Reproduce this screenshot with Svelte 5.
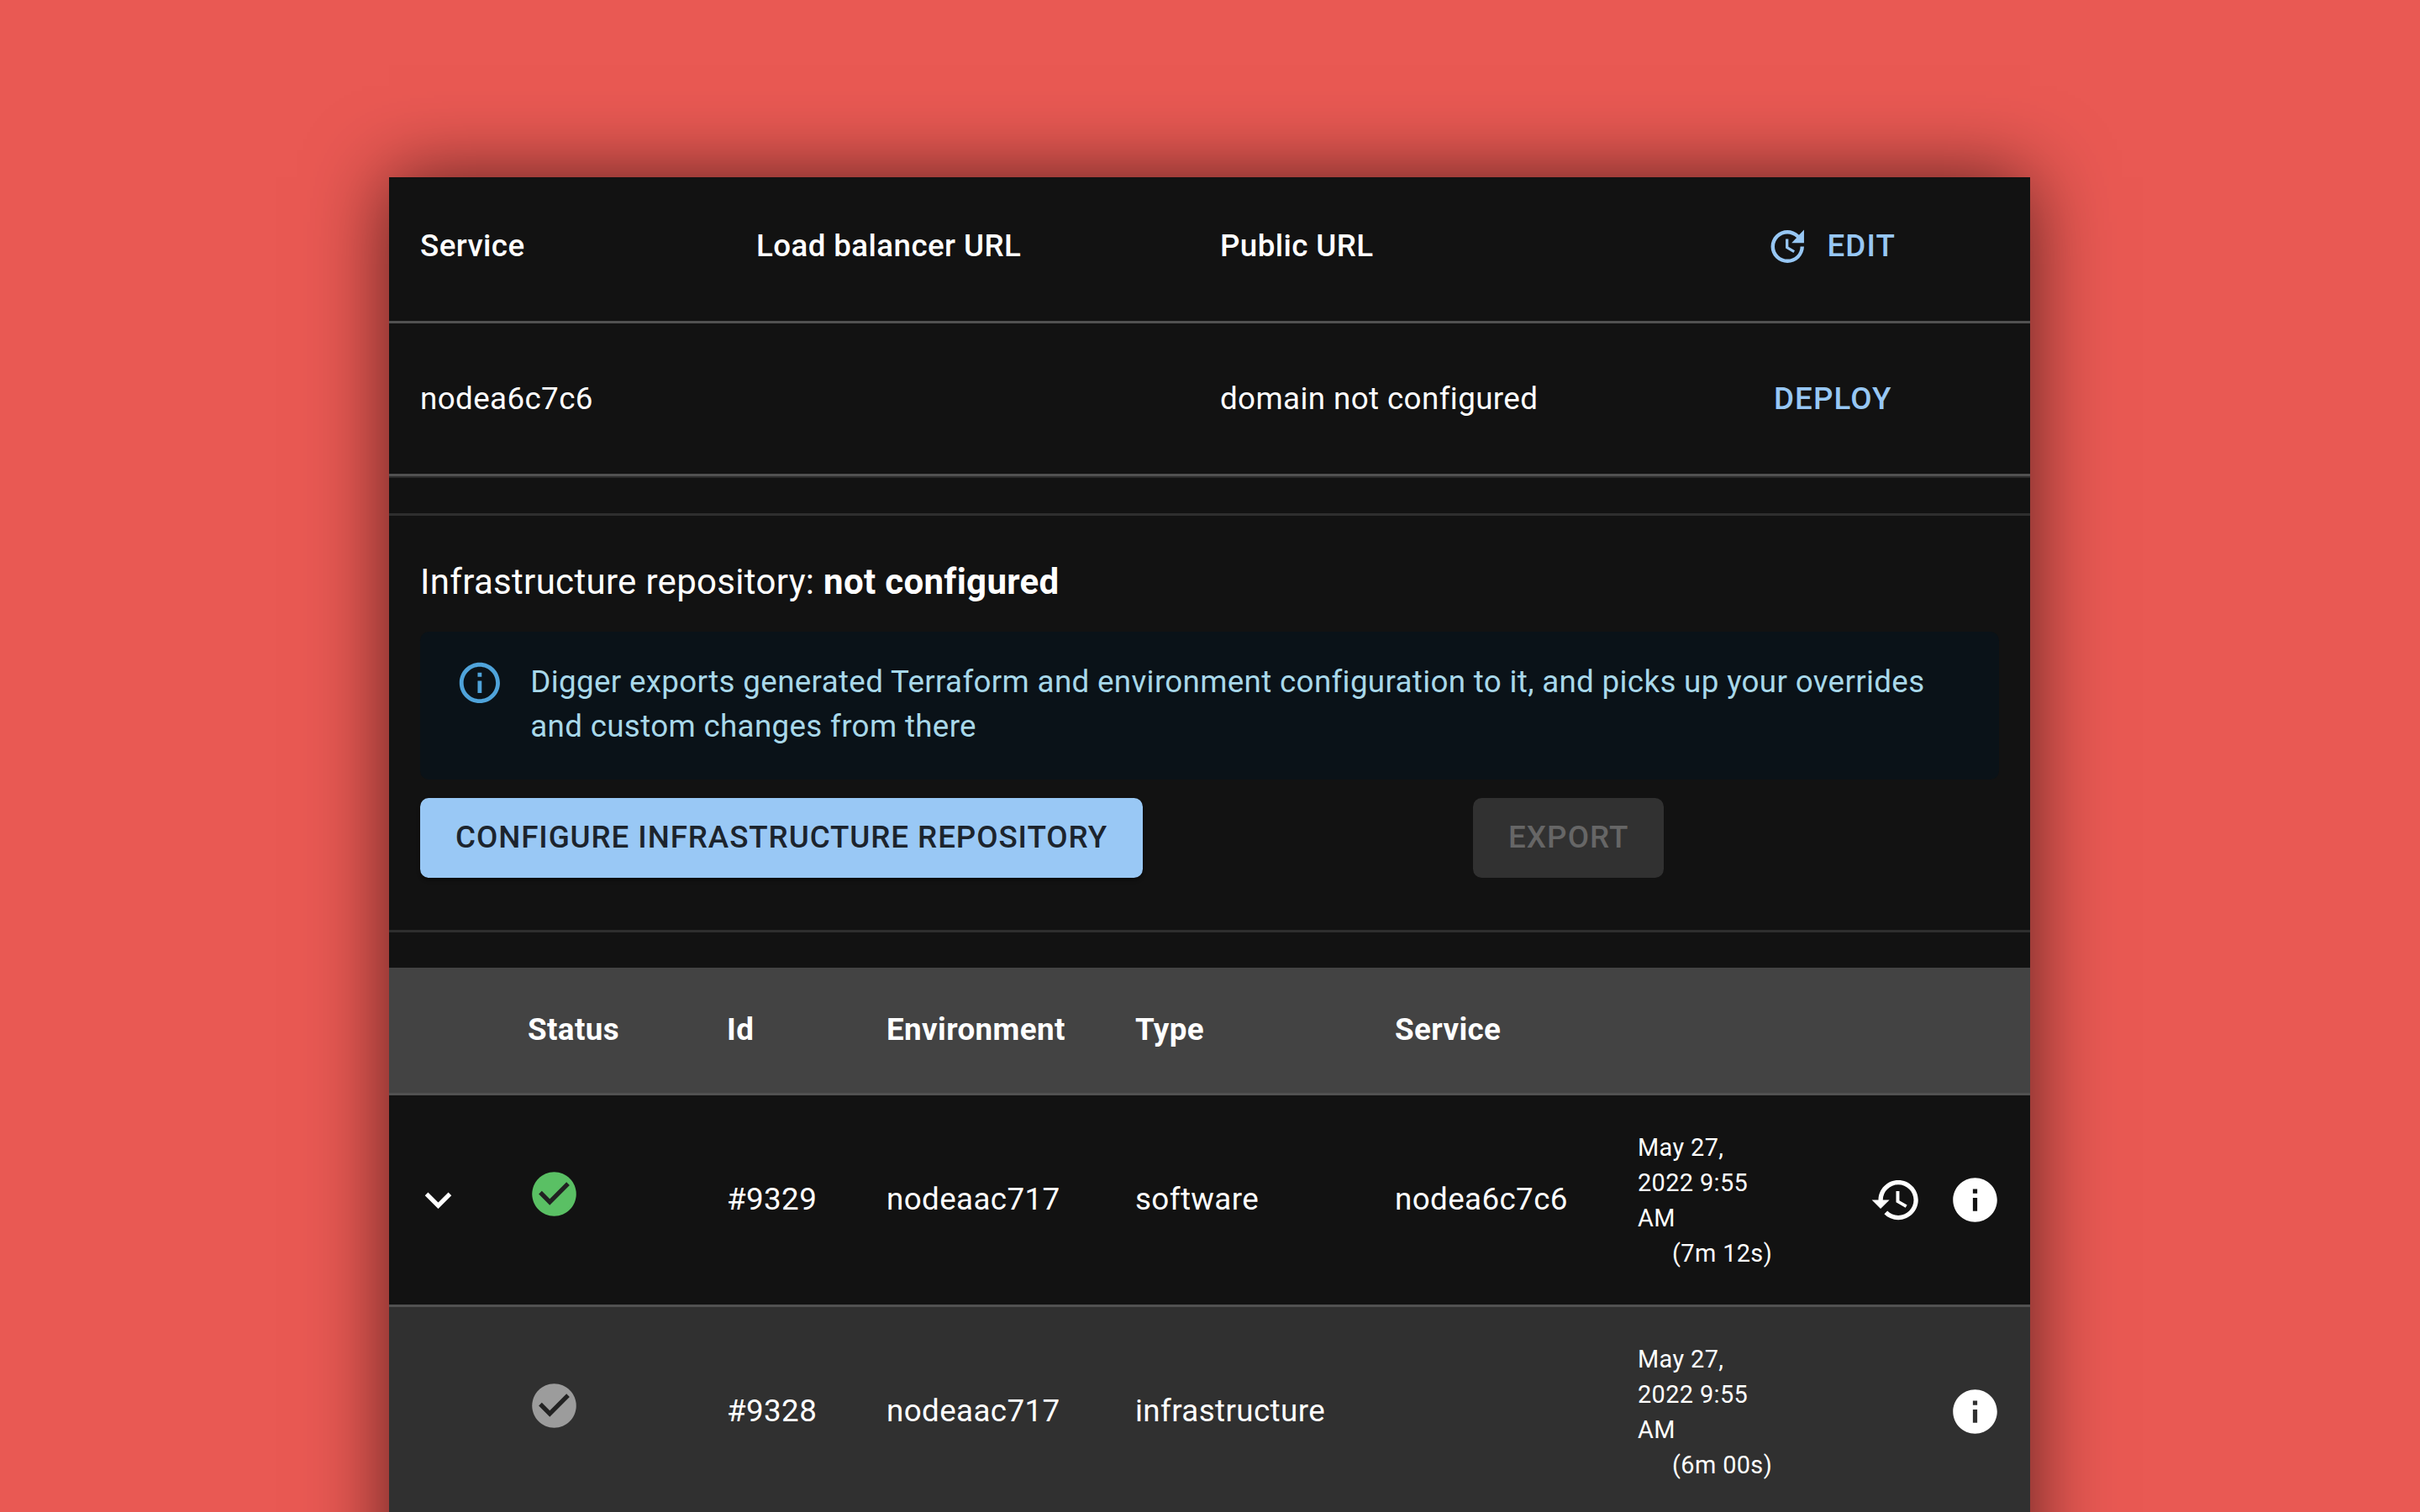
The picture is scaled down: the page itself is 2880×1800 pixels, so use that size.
<script>
  const services = [{ name: "nodea6c7c6", url: "", domain: "domain not configured" }];
  const deployments = [
    { id: "#9329", env: "nodeaac717", type: "software", service: "nodea6c7c6", took: "(7m 12s)", latest: true },
    { id: "#9328", env: "nodeaac717", type: "infrastructure", service: "", took: "(6m 00s)", latest: false }
  ];
  const check = "M12 2C6.48 2 2 6.48 2 12s4.48 10 10 10 10-4.48 10-10S17.52 2 12 2z";
  const tick = "M10 17l-5-5 1.41-1.41L10 14.17l7.59-7.59L19 8l-9 9z";
  const info = "M12 2C6.48 2 2 6.48 2 12s4.48 10 10 10 10-4.48 10-10S17.52 2 12 2zm1 15h-2v-6h2v6zm0-8h-2V7h2v2z";
</script>

<div class="page">
  <main class="card">
    <section class="services">
      <div class="svc-row head">
        <span>Service</span>
        <span>Load balancer URL</span>
        <span>Public URL</span>
        <button class="text-btn edit">
          <svg viewBox="0 0 24 24" class="edit-icon"><path d="M21 10.12h-6.78l2.74-2.82c-2.73-2.7-7.15-2.8-9.88-.1-2.73 2.71-2.73 7.08 0 9.79s7.15 2.71 9.88 0C18.32 15.65 19 14.08 19 12.1h2c0 1.98-.88 4.55-2.64 6.29-3.51 3.48-9.21 3.48-12.72 0-3.5-3.47-3.53-9.11-.02-12.58s9.14-3.47 12.65 0L21 3v7.12zM12.5 8v4.25l3.5 2.08-.72 1.21L11 13V8h1.5z" /></svg>
          Edit
        </button>
      </div>
      {#each services as s}
        <div class="svc-row body">
          <span>{s.name}</span>
          <span>{s.url}</span>
          <span>{s.domain}</span>
          <button class="text-btn">Deploy</button>
        </div>
      {/each}
    </section>

    <section class="repo">
      <h2>Infrastructure repository: <strong>not configured</strong></h2>
      <div class="alert">
        <svg viewBox="0 0 24 24" class="alert-icon"><path d="M11 7h2v2h-2zm0 4h2v6h-2zm1-9C6.48 2 2 6.48 2 12s4.48 10 10 10 10-4.48 10-10S17.52 2 12 2zm0 18c-4.41 0-8-3.59-8-8s3.59-8 8-8 8 3.59 8 8-3.59 8-8 8z" /></svg>
        <p>Digger exports generated Terraform and environment configuration to it, and picks up your overrides and custom changes from there</p>
      </div>
      <div class="actions">
        <button class="primary">Configure infrastructure repository</button>
        <button class="disabled">Export</button>
      </div>
    </section>

    <section class="deployments">
      <div class="dep-row dep-head">
        <span></span>
        <span>Status</span>
        <span>Id</span>
        <span>Environment</span>
        <span>Type</span>
        <span>Service</span>
      </div>
      {#each deployments as d}
        <div class="dep-row" class:alt={!d.latest}>
          <span class="chevron">
            {#if d.latest}
              <svg viewBox="0 0 24 24"><path d="M16.59 8.59L12 13.17 7.41 8.59 6 10l6 6 6-6z" /></svg>
            {/if}
          </span>
          <span class="status">
            <svg viewBox="0 0 24 24">
              <path d={check} class={d.latest ? "ok" : "old"} />
              <path d={tick} class="tick" />
            </svg>
          </span>
          <span>{d.id}</span>
          <span>{d.env}</span>
          <span>{d.type}</span>
          <span>{d.service}</span>
          <span class="date">May 27, 2022 9:55 AM<span class="took">{d.took}</span></span>
          <span class="row-actions">
            {#if d.latest}
              <svg viewBox="0 0 24 24"><path d="M13 3c-4.97 0-9 4.03-9 9H1l3.89 3.89.07.14L9 12H6c0-3.87 3.13-7 7-7s7 3.13 7 7-3.13 7-7 7c-1.93 0-3.68-.79-4.94-2.06l-1.42 1.42C8.27 19.99 10.51 21 13 21c4.97 0 9-4.03 9-9s-4.03-9-9-9zm-1 5v5l4.28 2.54.72-1.21-3.5-2.08V8h-1.5z" /></svg>
            {/if}
            <svg viewBox="0 0 24 24"><path d={info} /></svg>
          </span>
        </div>
      {/each}
    </section>
  </main>
</div>

<style>
  :global(body) {
    margin: 0;
    background: #e95953;
  }

  .page {
    height: 1800px;
    overflow: hidden;
    box-sizing: border-box;
    padding: 211px 464px 0 463px;
    font-family: Roboto, "Liberation Sans", sans-serif;
    font-size: 36.75px;
    line-height: 1.43;
    letter-spacing: 0.01071em;
    color: #fff;
  }

  .card {
    background: #121212;
    box-shadow: 0 0 90px rgba(0, 0, 0, 0.62);
    min-height: 1700px;
  }

  .services {
    border-bottom: 2px solid #2a2a2a;
  }

  .svc-row {
    display: grid;
    grid-template-columns: 400px 552px 659px 1fr;
    padding-left: 37px;
    box-sizing: border-box;
    border-bottom: 3px solid #515151;
  }

  .svc-row.head {
    height: 174px;
    padding-top: 56px;
    font-weight: 500;
  }

  .svc-row.body {
    height: 182px;
    padding-top: 64px;
  }

  .text-btn {
    align-self: start;
    justify-self: start;
    display: flex;
    align-items: center;
    background: none;
    border: 0;
    padding: 0;
    font: inherit;
    font-weight: 500;
    line-height: 52.5px;
    letter-spacing: 0.03em;
    text-transform: uppercase;
    color: #97c7f4;
  }

  .text-btn.edit {
    margin-left: -10px;
  }

  .edit-icon {
    width: 52.5px;
    height: 52.5px;
    margin-right: 21px;
    fill: #97c7f4;
  }

  .repo {
    margin-top: 42px;
    border-top: 3px solid #2e2e2e;
    border-bottom: 3px solid #2e2e2e;
    padding: 49px 37px 62px;
  }

  h2 {
    margin: 0;
    font-size: 42px;
    font-weight: 400;
    line-height: 60px;
    letter-spacing: 0.0075em;
  }

  strong {
    font-weight: 700;
  }

  .alert {
    display: flex;
    margin-top: 29px;
    padding: 34px 42px 37px;
    background: #0a1218;
    border-radius: 10.5px;
    color: #a8d8ea;
  }

  .alert-icon {
    flex: none;
    width: 57.75px;
    height: 57.75px;
    margin-top: -2px;
    margin-right: 31.5px;
    fill: #4fa3da;
  }

  .alert p {
    margin: 0;
    font-size: 36.75px;
    line-height: 52.5px;
    letter-spacing: 0.009em;
  }

  .actions {
    display: flex;
    margin-top: 22px;
    gap: 393px;
  }

  .actions button {
    height: 95px;
    padding: 0 42px;
    border: 0;
    border-radius: 10.5px;
    font: inherit;
    font-weight: 500;
    letter-spacing: 0.025em;
    text-transform: uppercase;
  }

  .actions .disabled {
    letter-spacing: 0.029em;
  }

  .primary {
    background: #99c8f5;
    color: #1c242d;
    box-shadow: 0 3px 4px rgba(0, 0, 0, 0.4);
  }

  .disabled {
    background: #313131;
    color: #666;
  }

  .deployments {
    margin-top: 42px;
  }

  .dep-row {
    display: grid;
    grid-template-columns: 165px 237px 190px 296px 309px 289px 1fr auto;
    align-items: center;
    height: 252px;
    box-sizing: border-box;
    border-bottom: 3px solid #515151;
  }

  .dep-row.dep-head {
    height: 152px;
    background: #434343;
    font-weight: 700;
  }

  .dep-row.alt {
    background: #303030;
  }

  .chevron svg {
    display: block;
    width: 63px;
    height: 63px;
    margin-left: 26.5px;
    fill: #fff;
  }

  .status svg {
    display: block;
    width: 63px;
    height: 63px;
    margin-bottom: 14px;
  }

  .ok {
    fill: #5ac064;
  }

  .old {
    fill: #9c9c9c;
  }

  .tick {
    fill: #222;
  }

  .date {
    width: 165px;
    font-size: 28.875px;
    line-height: 42px;
  }

  .took {
    display: block;
    width: 200px;
    padding-left: 41px;
  }

  .row-actions {
    display: flex;
    justify-content: flex-end;
    gap: 31px;
    padding-right: 34px;
  }

  .row-actions svg {
    width: 63px;
    height: 63px;
    fill: #fff;
  }
</style>
